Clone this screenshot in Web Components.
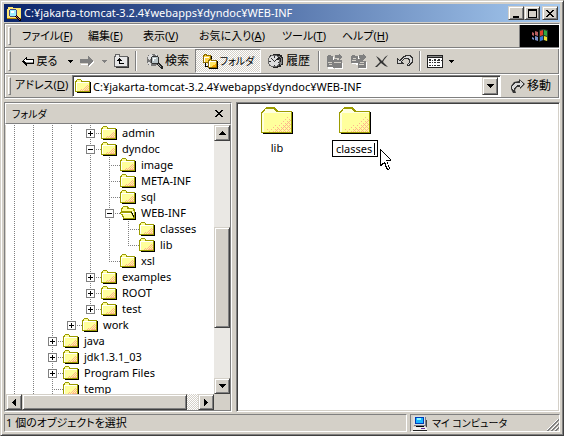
<!DOCTYPE html>
<html lang="ja">
<head>
<meta charset="utf-8">
<title>C:¥jakarta-tomcat-3.2.4¥webapps¥dyndoc¥WEB-INF</title>
<style>
:root{--face:#d4d0c8;--shade:#808080;--dark:#404040}
body{margin:0;font:11px/16px "Noto Sans","Noto Sans CJK JP",sans-serif;font-feature-settings:"palt";color:#000;background:var(--face)}
</style>
</head>
<body>
<explorer-window></explorer-window>
<script>
const ICONS={
folder:[16,14,`<path d="M15 3h1v11H2v-1h13z" fill="#000"/><path d="M0 13V2h1V1h1V0h4v1h1v1h8v11z" fill="#9c9c00"/><path d="M1 12V3h1V1h4v2h8v9z" fill="#ffff9c"/><path d="M1 3h13v1H2v8H1z" fill="#fff"/><path d="M12 6h1v1h-1zM11 7h1v1h-1zM13 7h1v1h-1zM10 8h1v1h-1zM12 8h1v1h-1zM9 9h1v1H9zM11 9h1v1h-1zM13 9h1v1h-1zM6 10h1v1H6zM8 10h1v1H8zM10 10h1v1h-1zM12 10h1v1h-1zM5 11h1v1H5zM7 11h1v1H7zM9 11h2v1H9zM11 11h3v1h-3z" fill="#ffb58c"/>`],
open:[16,14,`<path d="M2 13h13V6h1v8H3z" fill="#000"/><path d="M1 7V2h1V1h1V0h5v1h1v1h5v1h1v10H3v-2H2V9H1V8H0V6h1z" fill="#9c9c00"/><path d="M2 5V3h1V1h4v2h6v2z" fill="#ffff9c"/><path d="M1 7h10v1h1v2h1v2H4v-2H3V8H1z" fill="#ffff9c"/><path d="M1 7h10v1H3z" fill="#fff"/><path d="M12 5h2v5h-1V8h-1z" fill="#ffffce"/><path d="M11 6h1v1h1v2h1v2h-1V9h-1V7h-1z" fill="#000"/>`],
big:[32,27,`<path d="M31 5h1v22H2v-1h29z" fill="#000"/><path d="M0 26V5h1V4h1V3h1V2h1V1h1V0h9v1h1v1h1v1h1v1h14v22z" fill="#9c9c00"/><path d="M1 25V6h1V5h1V4h1V3h1V2h8v1h1v1h1v1h15v20z" fill="#ffff9c"/><path d="M4 2h9v1h1v1h1v1h15v1H3v19H1V6l3-3z" fill="#ffffe0"/><path d="M3 6h27v19H3z" fill="#ffff9c"/><path d="M30 8v17H5v-2l7-3 7-5 7-5z" fill="url(#d)"/><path d="M30 12v13H10l8-4 6-5z" fill="url(#e)"/>`],
find:[15,15,`<path d="M0 3h1V1h5v1h8v11H0z" fill="#ffe773"/><path d="M0 12h14v1H0z" fill="#b58400"/><circle cx="6" cy="7" r="4.5" fill="#424a84"/><circle cx="6" cy="7" r="3.5" fill="#9cefff"/><path d="M4 5h3v2H4z" fill="#fff"/><path d="M9 9l5 5v1h-2L8 11z" fill="#000"/><path d="M9 10l4 4" stroke="#a55"/>`],
back:[13,11,`<path d="M5 0v3h7v5H5v3L0 6V5z" fill="#000"/><path d="M4 2v2h7v2H4v1L2 5z" fill="#fff"/><path d="M3 6h8v1H5v1z" fill="#999"/>`],
fwd:[14,11,`<path d="M9 2v-1l5 5-5 5V9H1V8h8z" fill="#fff"/><path d="M8 0l5 5-5 5V7H0V3h8z" fill="#808080"/>`],
up:[16,14,`<path d="M1 13V2h1V0h5v2h8v11z" fill="#636363"/><path d="M2 12V3h1V1h3v2h8v9z" fill="#e7e7e7"/><path d="M15 3h1v11H3v-1h12z" fill="#333"/><path d="M6 4h1v1h1v1h1v1H7v2h4v1H6V7H4V6h1V5h1z" fill="#000"/>`],
search:[17,16,`<circle cx="7" cy="7" r="6.5" fill="#777"/><path d="M2 3l3-2 2 2-3 4-2-1zM2 9l3 1v3l-2-1zM9 1l3 1-2 1z" fill="#ddd"/><circle cx="9" cy="7" r="4.5" fill="#333"/><circle cx="9" cy="7" r="3.5" fill="#b8c4c8"/><path d="M7 5h3v1H8v2H7z" fill="#fff"/><path d="M11 10l1-1 5 5v2h-2l-4-4z" fill="#222"/><path d="M12 11l3 3" stroke="#aaa"/>`],
folders:[16,15,`<path d="M1 9V1h1V0h3v1h4v8z" fill="#8c6b00"/><path d="M2 8V2h1V1h1v1h4v6z" fill="#ffd542"/><path d="M3 9h1v3h3v1H3z" fill="#000"/><path d="M9 2h1v6H9zM15 7h1v8H7v-1h8z" fill="#000"/><path d="M6 14V6h1V5h3v1h5v8z" fill="#8c6b00"/><path d="M7 13V7h1V6h1v1h5v6z" fill="#ffe763"/><path d="M7 7h7v1H8v5H7zM2 3h5v1H3v4H2z" fill="#fff"/><path d="M10 12h1v-1h2v-1h1v3h-4z" fill="#f7a500"/>`],
history:[17,16,`<path d="M3 2h3V1h7v1h2v2h1v8h-2v2h-3v1H6v-1H4v-2H3z" fill="#222"/><circle cx="7" cy="8" r="6.5" fill="#666"/><circle cx="7" cy="8" r="5.5" fill="#ddd"/><path d="M7 8l5-5 1 3z" fill="#222"/><path d="M2 8h2v1H2zM7 3h1v2H7zM7 12h1v1H7zM4 5l4 3-1 1zM11 9h1v1h-1z" fill="#333"/><path d="M12 3l2 3-1 6 2-2V5z" fill="#888"/>`],
moveto:[17,15,`<g transform="translate(1 1)" fill="#fff"><path d="M0 4V1h4v1h2v2h1v3H6v7H0zM7 13V7h3v1h5v6H7z"/></g><path d="M0 13V2h1V1h3v1h2v4h1V5h3v1h5v8H6v-1z" fill="#808080"/><path d="M1 8h4v1H1zM2 10h3v1H2zM7 8h7v1H7zM8 3h3V1l4 3-4 2V5H8z" fill="#d4d0c8"/><path d="M8 1h4V0l3 3-3 3V4H8z" fill="#808080"/>`],
copyto:[17,15,`<path d="M1 10V2h7v9zM8 15V8h8v7z" fill="#fff"/><path d="M0 9V2h1V1h3v1h3v3h2V4H8V1h4V0l4 3-4 3v1h3v7H7V9z" fill="#808080"/><path d="M2 4h3v1H2zM1 6h4v1H1zM9 8h4v1H9zM8 10h5v1H8z" fill="#d4d0c8"/>`],
del:[14,13,`<path d="M1 1l3 2 3 3 3-4 3-2-4 5-1 2 5 5-3-1-4-3-4 4-2 0 5-5z" fill="#333" shape-rendering="auto"/>`],
undo:[16,12,`<path d="M0 3l2 2 4-4 4-1h3l3 3v4l-3 4h-3v-1l2-3V5l-2-1H7L5 7l2 2H0z" fill="#333"/><path d="M1 5l2 1 4-4 3-1h2l3 3v2l-3 4h-1l2-3V5l-2-2H7L4 6v2H1z" fill="#d9d9d9"/>`],
views:[16,13,`<path d="M0 0h16v13H0z" fill="#222"/><path d="M1 3h14v9H1z" fill="#fff"/><path d="M1 1h14v1H1z" fill="#888"/><path d="M2 4h2v2H2zM7 4h2v2H7zM11 4h2v2h-2zM2 7h2v1H2zM7 7h2v1H7zM11 7h2v1h-2zM2 10h2v1H2zM7 10h2v1H7zM11 10h2v1h-2zM5 5h1v1H5zM10 5h1v1h-1zM14 5h1v1h-1zM5 7h1v1H5zM10 7h1v1h-1zM5 10h1v1H5zM10 10h1v1h-1z" fill="#333"/>`],
go:[14,14,`<path d="M8 0l6 5-5 5V8H6l-2 3 1 3H2L0 10V7l3-4 5-1z" fill="#333" shape-rendering="auto"/><path d="M9 2l3 3-3 3V6H6L3 9v3L1 9V7l3-3h5z" fill="#d8d8d8"/>`],
dd:[5,3,`<path d="M0 0h5v1H4v1H3v1H2V2H1V1H0z" fill="currentColor"/>`],
aup:[7,4,`<path d="M3 0h1v1h1v1h1v1h1v1H0V3h1V2h1V1h1z"/>`],
adown:[7,4,`<path d="M0 0h7v1H6v1H5v1H4v1H3V3H2V2H1V1H0z"/>`],
aleft:[4,7,`<path d="M0 3h1V2h1V1h1V0h1v7H3V6H2V5H1V4H0z"/>`],
aright:[4,7,`<path d="M0 0h1v1h1v1h1v1h1v1H3v1H2v1H1v1H0z"/>`],
min:[9,9,`<path d="M1 7h6v2H1z"/>`],
max:[9,9,`<path d="M0 0h9v9H0zM1 2v6h7V2z" fill-rule="evenodd"/>`],
x:[8,7,`<path d="M0 0h2v1h1v1h2V1h1V0h2v1H7v1H6v1H5v1h1v1h1v1h1v1H6V6H5V5H3v1H2v1H0V6h1V5h1V4h1V3H2V2H1V1H0z"/>`],
pc:[17,15,`<path d="M2 1h12v9H2z" fill="#737b8c"/><path d="M1 0h12v9H1z" fill="#dedede"/><path d="M3 1h9v7H3z" fill="#003cb5"/><path d="M4 2h7v5H4z" fill="#18b5ff"/><path d="M5 2h4v2H5z" fill="#8cf7ff"/><path d="M4 10h8v1H4z" fill="#000"/><path d="M1 11h12l2 2v1H1z" fill="#efefef"/><path d="M1 14h14v1H1z" fill="#222"/><path d="M9 12h4v1H9z" fill="#639"/><path d="M14 4h1v7h-1z" fill="#444"/>`],
logo:[18,16,`<g shape-rendering="auto"><path d="M8 2l4-1 5 1v11l-4-1-5 2z" fill="#243024"/><path d="M9 3l3-1v5L9 8z" fill="#e04028"/><path d="M13 2l3 1v5l-3-1z" fill="#30a840"/><path d="M9 9l3-1v4l-3 1z" fill="#3878e0"/><path d="M13 8l3 1v4l-3-1z" fill="#f0e030"/><path d="M4 3l3 1v4L4 7zM1 4l2 1v3L1 7z" fill="#b86060"/><path d="M4 8l3 1v4l-3-1zM1 9l2 1v2L1 11z" fill="#7890c8"/></g>`],
cursor:[12,21,`<path d="M0 0l11 11v1H7l3 7-1 2H7l-3-7-3 3H0z" fill="#000"/><path d="M1 2l9 9H6l3 8-1 1-3-7-4 2z" fill="#fff"/>`],
grip:[12,12,`<path d="M11 0L0 11M11 4L4 11M11 8l-3 3" stroke="#fff"/><path d="M12 0L0 12M12 1L1 12M12 4L4 12M12 5L5 12M12 8L8 12M12 9L9 12" stroke="#808080"/>`]
};
const DEFS='<defs><pattern id="d" width="4" height="4" patternUnits="userSpaceOnUse"><path d="M0 0h1v1H0zM2 2h1v1H2z" fill="#ffb58c"/></pattern><pattern id="e" width="4" height="4" patternUnits="userSpaceOnUse"><path d="M2 0h1v1H2zM0 2h1v1H0zM1 1h1v1H1zM3 3h1v1H3z" fill="#ffb58c"/></pattern></defs>';
function define(name,render){
  customElements.define(name,class extends HTMLElement{
    connectedCallback(){
      if(this.shadowRoot)return;
      this.attachShadow({mode:'open'}).innerHTML=render(this);
    }
  });
}
const base='*{box-sizing:border-box}button{font:inherit;color:inherit;font-feature-settings:inherit;border:0;padding:0;margin:0;background:none;white-space:nowrap}';

define('ui-icon',e=>{
  const n=e.getAttribute('name'),[w,h,body]=ICONS[n];
  return `<style>:host{display:block;flex:none}svg{display:block}</style><svg width="${w}" height="${h}" viewBox="0 0 ${w} ${h}" shape-rendering="crispEdges" aria-hidden="true">${n==='big'?DEFS:''}${body}</svg>`;
});

/* Raised 3D push button */
define('raised-button',e=>`<style>${base}:host{display:block;width:16px;height:16px;flex:none}
button{display:flex;align-items:center;justify-content:center;width:100%;height:100%;background:var(--face);border:1px solid;border-color:var(--face) var(--dark) var(--dark) var(--face);box-shadow:inset 1px 1px #fff,inset -1px -1px var(--shade)}</style>
<button aria-label="${e.getAttribute('label')}"><ui-icon name="${e.getAttribute('icon')}"></ui-icon></button>`);

define('title-bar',e=>`<style>${base}:host{display:flex;align-items:center;height:18px;padding:0 2px 0 3px;background:linear-gradient(90deg,#0a246a,#a6caf0);color:#fff}
h1{flex:1;margin:0 0 0 2px;font:inherit;line-height:18px;white-space:nowrap;overflow:hidden}
.b{display:flex}.b raised-button{height:14px}.b raised-button:last-child{margin-left:2px}</style>
<ui-icon name="find"></ui-icon><h1><slot></slot></h1><div class="b"><raised-button icon="min" label="最小化"></raised-button><raised-button icon="max" label="最大化"></raised-button><raised-button icon="x" label="閉じる"></raised-button></div>`);

/* One rebar strip with a drag grip */
define('tool-band',e=>`<style>${base}:host{display:flex;height:26px;border-top:1px solid #fff;border-bottom:1px solid var(--shade);padding-left:3px}
:host([short]){height:24px}
i{flex:none;width:3px;margin:2px 3px 2px 0;border:1px solid;border-color:#fff var(--shade) var(--shade) #fff}
div{flex:1;display:flex;align-items:stretch;min-width:0}</style><i></i><div><slot></slot></div>`);

define('menu-bar',e=>`<style>${base}:host{display:flex;flex:1}
nav{flex:1;display:grid;grid-template-columns:66px 55px 56px 83px 60px 60px;padding-left:8px}
button{text-align:left}
.logo{width:40px;border-left:1px solid var(--shade);background:#000;display:flex;align-items:center;justify-content:center}</style>
<nav>${[['ファイル','F'],['編集','E'],['表示','V'],['お気に入り','A'],['ツール','T'],['ヘルプ','H']].map(([t,k])=>`<button>${t}(<u>${k}</u>)</button>`).join('')}</nav><div class="logo"><ui-icon name="logo"></ui-icon></div>`);

define('tool-button',e=>`<style>${base}:host{display:flex;flex:none;width:24px;font-size:12px}
:host([size="xs"]){width:10px}:host([size="s"]){width:22px}:host([size="m"]){width:51px;font-size:11px}:host([size="l"]){width:55px}:host([size="xl"]){width:66px}
:host([kana]){font-size:10px}:host([off]){color:var(--shade)}
button{flex:1;display:flex;align-items:center;justify-content:center;gap:2px}
:host([pressed]) button{border:1px solid;border-color:var(--shade) #fff #fff var(--shade);background:repeating-conic-gradient(#fff 0 25%,var(--face) 0 50%) 0/2px 2px}</style>
<button aria-label="${e.getAttribute('label')||e.textContent}"><ui-icon name="${e.getAttribute('icon')}"></ui-icon><slot></slot></button>`);
define('tool-sep',e=>`<style>:host{flex:none;width:2px;margin:2px 3px 2px 2px;box-sizing:border-box;border-left:1px solid var(--shade);border-right:1px solid #fff}</style>`);

define('address-bar',e=>`<style>${base}:host{display:flex;flex:1;align-items:stretch}
label{flex:none;width:58px;padding-left:1px;line-height:20px;white-space:nowrap}
.f{flex:1;display:flex;align-items:center;background:#fff;border:1px solid;border-color:var(--shade) #fff #fff var(--shade);box-shadow:inset 1px 1px var(--dark);padding:1px 2px 1px 2px}
input{flex:1;min-width:0;border:0;outline:0;padding:0 0 0 2px;font:inherit;background:none;height:18px}
raised-button{height:18px}
.go{flex:none;width:58px;display:flex;align-items:center;gap:2px;padding-left:10px;font-size:12px}</style>
<label for="a">アドレス(<u>D</u>)</label><div class="f"><ui-icon name="folder"></ui-icon><input id="a" value="C:¥jakarta-tomcat-3.2.4¥webapps¥dyndoc¥WEB-INF"><raised-button icon="adown" label="一覧"></raised-button></div><button class="go"><ui-icon name="go"></ui-icon>移動</button>`);

/* path letters: I line, T branch, L last branch, + closed, - open, e closed and last */
define('tree-row',e=>{
  const cells=[...e.getAttribute('path')].map(c=>{
    const k={I:'v',T:'v h',L:'v half h','+':'v h','-':'v h',e:'v half h'}[c];
    const box='+-e'.includes(c)?`<button class="${c==='-'?'':'plus'}" aria-label="${c==='-'?'閉じる':'開く'}"></button>`:'';
    return `<span class="${k}">${box}</span>`;
  }).join('');
  return `<style>${base}:host{display:flex;height:16px;align-items:center;white-space:nowrap}
span{position:relative;flex:none;width:19px;height:16px;display:flex;align-items:center;padding-left:4px}
span::before{content:"";position:absolute;left:8px;top:0;bottom:0;width:1px;background:repeating-linear-gradient(#808080 0 1px,#fff 1px 2px)}
span.half::before{bottom:7px}
span.h::after{content:"";position:absolute;left:8px;right:0;top:8px;height:1px;background:repeating-linear-gradient(90deg,#808080 0 1px,#fff 1px 2px)}
button{position:relative;z-index:1;width:9px;height:9px;border:1px solid #808080;background:linear-gradient(#000,#000) 1px 3px/5px 1px no-repeat #fff}
button.plus{background:linear-gradient(#000,#000) 1px 3px/5px 1px no-repeat,linear-gradient(#000,#000) 3px 1px/1px 5px no-repeat #fff}
b{font-weight:400;margin-left:5px}</style>${cells}<ui-icon name="${e.hasAttribute('open')?'open':'folder'}"></ui-icon><b><slot></slot></b>`;
});

define('scroll-bar',e=>{
  const h=e.hasAttribute('horizontal'),[a,t,b]=e.getAttribute('parts').split(' ');
  return `<style>${base}:host{display:flex;flex-direction:${h?'row':'column'};background:repeating-conic-gradient(#fff 0 25%,var(--face) 0 50%) 0/2px 2px}
.t{flex:${t} 1 0;background:var(--face);border:1px solid;border-color:var(--face) var(--dark) var(--dark) var(--face);box-shadow:inset 1px 1px #fff,inset -1px -1px var(--shade)}
.a{flex:${a} 1 0}.b{flex:${b} 1 0}</style>
<raised-button icon="${h?'aleft':'aup'}" label="前へ"></raised-button><div class="a"></div><div class="t"></div><div class="b"></div><raised-button icon="${h?'aright':'adown'}" label="次へ"></raised-button>`;
});

define('folder-pane',e=>`<style>${base}:host{display:flex;flex-direction:column;flex:0 0 228px;box-sizing:border-box;border:1px solid;border-color:var(--shade) #fff #fff var(--shade);min-height:0}
header{display:flex;justify-content:space-between;align-items:center;height:21px;padding:0 7px 0 6px;font-size:10px;border:1px solid;border-color:#fff var(--shade) var(--shade) #fff}
.g{flex:1;min-height:0;display:grid;grid-template:minmax(0,1fr) 16px/minmax(0,1fr) 16px;padding-left:1px;border-top:1px solid #fff;border-right:1px solid var(--shade);border-bottom:1px solid var(--shade)}
.t{background:#fff;overflow:hidden}</style>
<header><span>フォルダ</span><button aria-label="閉じる"><ui-icon name="x"></ui-icon></button></header>
<div class="g"><div class="t"><slot></slot></div><scroll-bar parts="87 100 50"></scroll-bar><scroll-bar horizontal parts="0 165 11"></scroll-bar></div>`);

define('file-view',e=>`<style>${base}:host{display:block;flex:1;background:#fff;border:1px solid;border-color:var(--shade) #fff #fff var(--shade);box-shadow:inset 1px 1px var(--dark),inset -1px -1px var(--face)}
div{display:flex;gap:2px;padding:4px 2px}</style><div><slot></slot></div>`);

define('file-item',e=>{
  const n=e.getAttribute('name');
  return `<style>${base}:host{display:flex;flex-direction:column;align-items:center;width:76px;gap:6px;position:relative}
span,input{font:inherit;height:16px;line-height:16px}
div{display:flex;align-items:center;width:46px;height:17px;border:1px solid #000;padding-left:3px;background:#fff}
input{width:38px;border:0;outline:0;padding:0;background:none}
i{width:1px;height:12px;background:#000}
.c{position:absolute;left:83%;top:42px}</style><ui-icon name="big"></ui-icon>${e.hasAttribute('editing')?`<div><input aria-label="名前" value="${n}"><i></i></div><ui-icon class="c" name="cursor"></ui-icon>`:`<span>${n}</span>`}`;
});

define('status-bar',e=>`<style>${base}:host{display:flex;gap:3px;height:18px;margin-top:2px;line-height:16px}
div{border:1px solid;border-color:var(--shade) #fff #fff var(--shade);white-space:nowrap}
.l{flex:1;padding-left:1px}.r{flex:0 0 150px;display:flex;align-items:center;gap:3px;padding-left:1px;font-size:10px}
.r ui-icon:last-child{margin-left:auto;align-self:flex-end}</style>
<div class="l">1 個のオブジェクトを選択</div><div class="r"><ui-icon name="pc"></ui-icon>マイ コンピュータ<ui-icon name="grip"></ui-icon></div>`);

const rows=[['IIII+','admin'],['IIII-','dyndoc'],['IIIIIT','image'],['IIIIIT','META-INF'],['IIIIIT','sql'],['IIIII-','WEB-INF',1],['IIIIIIT','classes'],['IIIIIIL','lib'],['IIIIIL','xsl'],['IIII+','examples'],['IIII+','ROOT'],['IIIIe','test'],['IIIe','work'],['II+','java'],['II+','jdk1.3.1_03'],['II+','Program Files'],['IIT','temp']];

define('explorer-window',e=>`<style>${base}:host{display:flex;flex-direction:column;height:100vh;box-sizing:border-box;overflow:hidden;padding:3px;border:1px solid;border-color:var(--face) var(--dark) var(--dark) var(--face);background:var(--face);box-shadow:inset 1px 1px #fff,inset -1px -1px var(--shade)}
.bars{margin:1px 0 3px;border:1px solid;border-color:var(--shade) #fff #fff var(--shade);box-shadow:inset 1px 0 #fff,inset -1px 0 var(--shade)}
.main{flex:1;display:flex;gap:4px;min-height:0}</style>
<title-bar>C:¥jakarta-tomcat-3.2.4¥webapps¥dyndoc¥WEB-INF</title-bar>
<div class="bars">
<tool-band short><menu-bar></menu-bar></tool-band>
<tool-band>
<tool-button size="m" icon="back">戻る</tool-button><tool-button size="xs" icon="dd" label="戻る一覧"></tool-button>
<tool-button icon="fwd" label="進む" off></tool-button><tool-button size="xs" icon="dd" label="進む一覧" off></tool-button>
<tool-button icon="up" label="上へ"></tool-button><tool-sep></tool-sep>
<tool-button size="l" icon="search">検索</tool-button><tool-button size="xl" icon="folders" kana pressed>フォルダ</tool-button><tool-button size="l" icon="history">履歴</tool-button><tool-sep></tool-sep>
<tool-button icon="moveto" label="移動先"></tool-button><tool-button icon="copyto" label="コピー先"></tool-button><tool-button size="s" icon="del" label="削除"></tool-button><tool-button icon="undo" label="元に戻す"></tool-button><tool-sep></tool-sep>
<tool-button size="s" icon="views" label="表示"></tool-button><tool-button size="xs" icon="dd" label="表示一覧"></tool-button>
</tool-band>
<tool-band short><address-bar></address-bar></tool-band>
</div>
<div class="main"><folder-pane>${rows.map(([p,t,o])=>`<tree-row path="${p}"${o?' open':''}>${t}</tree-row>`).join('')}</folder-pane>
<file-view><file-item name="lib"></file-item><file-item name="classes" editing></file-item></file-view></div>
<status-bar></status-bar>`);
</script>
</body>
</html>
